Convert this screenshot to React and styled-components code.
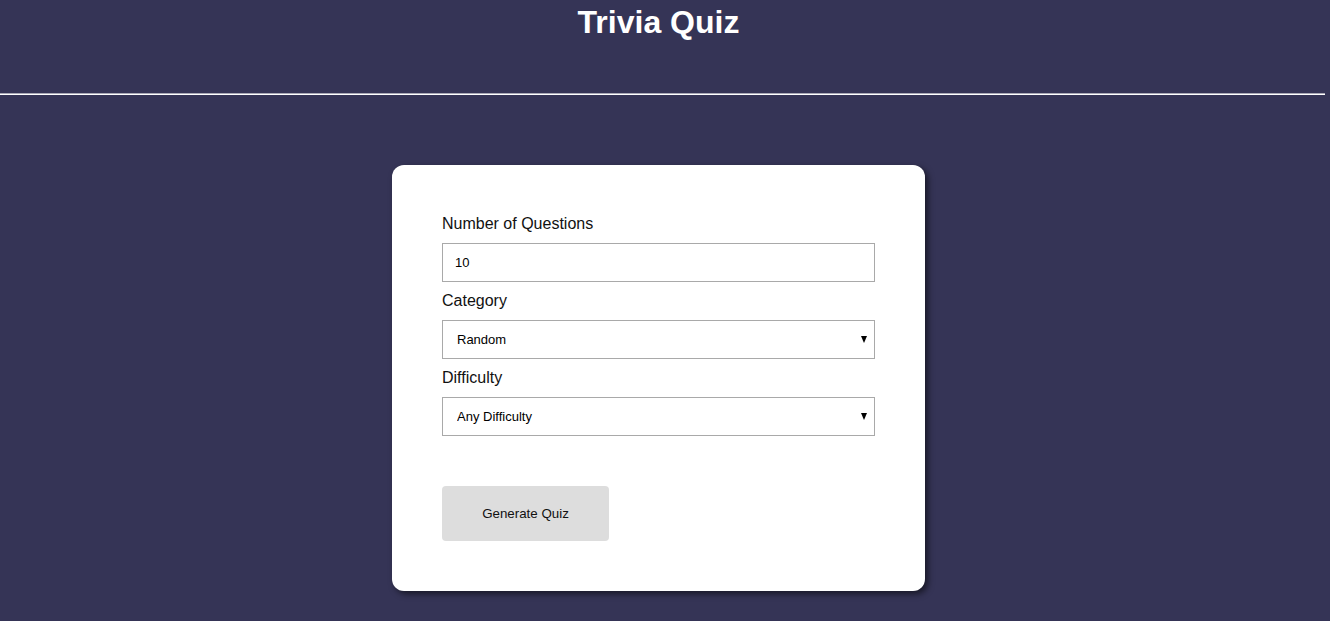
import React, { useState } from "react";
import styled, { createGlobalStyle } from "styled-components";

const GlobalStyle = createGlobalStyle`
  html, body {
    margin: 0;
    padding: 0;
    background-color: #353456;
    font-family: "Liberation Sans", Arial, sans-serif;
    overflow: hidden;
  }
`;

const Page = styled.div`
  width: 1317px;
  min-height: 621px;
`;

const Header = styled.header`
  height: 93px;
  padding-top: 4px;
  box-sizing: border-box;
`;

const Title = styled.h1`
  margin: 0;
  color: white;
  text-align: center;
  font-size: 32px;
  line-height: 37px;
  font-weight: bold;
`;

const Divider = styled.div`
  width: 1325px;
  height: 0;
  border-top: 1px solid #a9a8b6;
  border-bottom: 1px solid #ffffff;
`;

const Main = styled.main`
  display: flex;
  justify-content: center;
  padding-top: 70px;
`;

const Card = styled.form`
  width: 533px;
  box-sizing: border-box;
  padding: 50px 50px 50px;
  background-color: white;
  border-radius: 12px;
  box-shadow: 3px 3px 6px rgba(0, 0, 0, 0.55);
  display: flex;
  flex-direction: column;
`;

const Label = styled.label`
  display: block;
  font-size: 16px;
  line-height: 18px;
  color: #111;
  margin-bottom: 10px;
`;

const Field = styled.div`
  position: relative;
  margin-bottom: 10px;
`;

const TextInput = styled.input`
  display: block;
  width: 100%;
  height: 39px;
  box-sizing: border-box;
  border: 1px solid #a9a9a9;
  padding: 0 12px;
  font-family: "Liberation Sans", Arial, sans-serif;
  font-size: 13px;
  color: #000;
  outline: none;
`;

const Select = styled.select`
  display: block;
  width: 100%;
  height: 39px;
  box-sizing: border-box;
  border: 1px solid #a9a9a9;
  border-radius: 0;
  background: white;
  padding: 0 14px;
  font-family: "Liberation Sans", Arial, sans-serif;
  font-size: 13px;
  color: #000;
  appearance: none;
  outline: none;
`;

const Arrow = styled.span`
  position: absolute;
  right: 8px;
  top: 16px;
  width: 0;
  height: 0;
  border-left: 3.5px solid transparent;
  border-right: 3.5px solid transparent;
  border-top: 7px solid #000;
  pointer-events: none;
`;

const Button = styled.button`
  margin-top: 40px;
  width: 167px;
  height: 55px;
  border: none;
  border-radius: 4px;
  background-color: #dddddd;
  font-family: "Liberation Sans", Arial, sans-serif;
  font-size: 13.333px;
  color: #111;
  cursor: pointer;
`;

const App = () => {
  const [amount, setAmount] = useState("10");
  const [category, setCategory] = useState("random");
  const [difficulty, setDifficulty] = useState("any");

  return (
    <Page>
      <GlobalStyle />
      <Header>
        <Title>Trivia Quiz</Title>
      </Header>
      <Divider />
      <Main>
        <Card onSubmit={(e) => e.preventDefault()}>
          <Label>Number of Questions</Label>
          <Field>
            <TextInput
              type="text"
              value={amount}
              onChange={(e) => setAmount(e.target.value)}
            />
          </Field>
          <Label>Category</Label>
          <Field>
            <Select value={category} onChange={(e) => setCategory(e.target.value)}>
              <option value="random">Random</option>
              <option value="general">General Knowledge</option>
              <option value="books">Books</option>
            </Select>
            <Arrow />
          </Field>
          <Label>Difficulty</Label>
          <Field>
            <Select
              value={difficulty}
              onChange={(e) => setDifficulty(e.target.value)}
            >
              <option value="any">Any Difficulty</option>
              <option value="easy">Easy</option>
              <option value="medium">Medium</option>
              <option value="hard">Hard</option>
            </Select>
            <Arrow />
          </Field>
          <Button type="submit">Generate Quiz</Button>
        </Card>
      </Main>
    </Page>
  );
};

export default App;
